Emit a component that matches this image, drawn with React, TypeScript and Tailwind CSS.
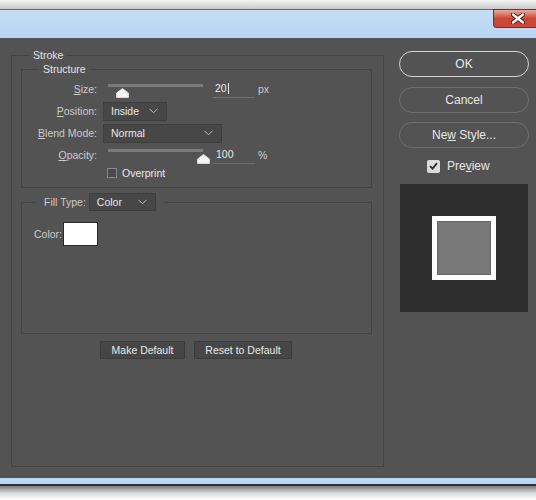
import type { ReactNode } from 'react'

/**
 * Photoshop "Layer Style — Stroke" dialog, dark theme, Win7 frame.
 */

const font = "font-['Liberation_Sans',Arial,sans-serif]"
const labelCls = 'text-[10.5px] leading-none text-[#cacaca]'
const valueCls = 'text-[10.5px] leading-none text-[#e8e8e8]'

function Chevron() {
  return (
    <svg width="9" height="6" viewBox="0 0 9 6" className="shrink-0">
      <path d="M0.5 0.8 L4.5 4.8 L8.5 0.8" fill="none" stroke="#bdbdbd" strokeWidth="1" />
    </svg>
  )
}

function Dropdown({ value, className }: { value: string; className: string }) {
  return (
    <div
      className={`flex items-center justify-between border border-[#3d3d3d] bg-[#474747] pl-[7px] pr-[8px] ${className}`}
    >
      <span className={valueCls}>{value}</span>
      <Chevron />
    </div>
  )
}

function Thumb() {
  return (
    <svg width="13" height="10" viewBox="0 0 13 10">
      <path
        d="M6.5 0.6 L12.4 5 V9.4 H0.6 V5 Z"
        fill="#f5f5f5"
        stroke="#e0e0e0"
        strokeWidth="1"
        strokeLinejoin="round"
      />
    </svg>
  )
}

function Slider({ trackTop, thumbLeft }: { trackTop: string; thumbLeft: string }) {
  return (
    <div className="relative ml-[11px] h-[22px] w-[95px] self-start">
      <div className={`h-[3px] bg-[#7a7a7a] ${trackTop}`} />
      <div className={`absolute top-[10px] ${thumbLeft}`}>
        <Thumb />
      </div>
    </div>
  )
}

function Label({ children }: { children: ReactNode }) {
  return <span className={`w-[75px] shrink-0 text-right ${labelCls}`}>{children}</span>
}

function Row({ children, className = 'h-[22px]' }: { children: ReactNode; className?: string }) {
  return <div className={`flex items-center ${className}`}>{children}</div>
}

function CloseGlyph() {
  return (
    <svg width="14" height="11" viewBox="0 0 14 11">
      <path d="M2 1.5 L12 9.5 M12 1.5 L2 9.5" stroke="#4a1a14" strokeWidth="4.2" strokeLinecap="round" />
      <path d="M2 1.5 L12 9.5 M12 1.5 L2 9.5" stroke="#ffffff" strokeWidth="2.4" strokeLinecap="round" />
    </svg>
  )
}

export default function App() {
  return (
    <div className={`flex h-[500px] w-[536px] flex-col overflow-hidden bg-white ${font}`}>
      {/* top shadow of window */}
      <div className="h-[9px] bg-gradient-to-b from-[#f4f4f4] to-[#c9c9c9]" />

      {/* title bar */}
      <div className="flex h-[29px] justify-end border-t border-[#5f6b78] bg-gradient-to-b from-[#c6def6] to-[#b7d5f4]">
        <div className="-mt-px flex h-[19px] w-[43px] items-center rounded-bl-[4px] border border-r-0 border-[#7a2a22] bg-gradient-to-b from-[#e9a89c] via-[#cf4535] to-[#c84a3a] pl-[17px]">
          <CloseGlyph />
        </div>
      </div>

      {/* dialog body */}
      <div className="flex h-[440px] bg-[#535353]">
        {/* Stroke group */}
        <fieldset className="ml-[11px] mt-[11px] h-[418px] w-[373px] border border-[#444444]">
          <legend className="ml-[17px] px-[4px] text-[10.5px] leading-[13px] text-[#e2e2e2]">Stroke</legend>

          {/* Structure */}
          <fieldset className="ml-[9px] w-[351px] border border-[#444444] pb-[7px]">
            <legend className="ml-[17px] px-[4px] text-[10.5px] leading-[14px] text-[#e2e2e2]">Structure</legend>

            <Row className="mt-[2px] h-[22px]">
              <Label>
                <span className="underline">S</span>ize:
              </Label>
              <Slider trackTop="mt-[6px]" thumbLeft="left-[8px]" />
              <div className="ml-[10px] flex h-[17px] w-[42px] items-center border-b border-[#2f7fdc] pl-[2px]">
                <span className={valueCls}>20</span>
                <span className="ml-px h-[11px] w-px bg-[#e8e8e8]" />
              </div>
              <span className={`ml-[3px] ${labelCls}`}>px</span>
            </Row>

            <Row>
              <Label>
                <span className="underline">P</span>osition:
              </Label>
              <Dropdown value="Inside" className="ml-[6px] h-[19px] w-[64px]" />
            </Row>

            <Row>
              <Label>
                <span className="underline">B</span>lend Mode:
              </Label>
              <Dropdown value="Normal" className="ml-[6px] h-[19px] w-[119px]" />
            </Row>

            <Row>
              <Label>
                <span className="underline">O</span>pacity:
              </Label>
              <Slider trackTop="mt-[5px]" thumbLeft="left-[89px]" />
              <div className="ml-[10px] flex h-[17px] w-[42px] items-center border-b border-[#6c6c6c] pl-[3px]">
                <span className={valueCls}>100</span>
              </div>
              <span className={`ml-[3px] ${labelCls}`}>%</span>
            </Row>

            <Row className="h-[14px] pl-[85px]">
              <span className="h-[10px] w-[10px] border border-[#8a8a8a] bg-[#4a4a4a]" />
              <span className={`ml-[5px] ${valueCls}`}>Overprint</span>
            </Row>
          </fieldset>

          {/* Fill Type */}
          <fieldset className="ml-[9px] mt-[5px] h-[141px] w-[351px] border border-[#444444]">
            <legend className="ml-[14px] pl-[8px] pr-[8px]">
              <div className="flex h-[18px] items-center">
                <span className={labelCls}>Fill Type:</span>
                <Dropdown value="Color" className="ml-[3px] h-[18px] w-[67px]" />
              </div>
            </legend>
            <div className="flex items-center pl-[12px] pt-[11px]">
              <span className={labelCls}>Color:</span>
              <div className="ml-px h-[24px] w-[35px] border border-[#2a2a2a] bg-white" />
            </div>
          </fieldset>

          <div className="mt-[7px] flex justify-center gap-[9px] pr-[3px]">
            <button
              type="button"
              className={`h-[18px] w-[85px] border border-[#3b3b3b] bg-[#464646] ${valueCls}`}
            >
              Make Default
            </button>
            <button
              type="button"
              className={`h-[18px] w-[98px] border border-[#3b3b3b] bg-[#464646] ${valueCls}`}
            >
              Reset to Default
            </button>
          </div>
        </fieldset>

        {/* right column */}
        <div className="ml-[15px] flex w-[130px] flex-col pt-[13px]">
          <button
            type="button"
            className="h-[26px] rounded-full border border-[#d4d4d4] text-[12px] text-[#ececec]"
          >
            OK
          </button>
          <button
            type="button"
            className="mt-[10px] h-[26px] rounded-full border border-[#6e6e6e] text-[12px] text-[#e6e6e6]"
          >
            Cancel
          </button>
          <button
            type="button"
            className="mt-[9px] h-[26px] rounded-full border border-[#6e6e6e] text-[12px] text-[#e6e6e6]"
          >
            Ne<span className="underline">w</span> Style...
          </button>
          <div className="mt-[10px] flex h-[16px] items-center pl-[28px]">
            <span className="flex h-[13px] w-[13px] items-center justify-center rounded-[2px] bg-[#dcdcdc]">
              <svg width="9" height="8" viewBox="0 0 9 8">
                <path d="M1 4.2 L3.5 6.6 L8 1.2" fill="none" stroke="#2e2e2e" strokeWidth="1.8" />
              </svg>
            </span>
            <span className="ml-[7px] text-[12px] leading-none text-[#e6e6e6]">
              Pre<span className="underline">v</span>iew
            </span>
          </div>
          <div className="ml-px mt-[10px] flex h-[128px] w-[128px] items-center justify-center bg-[#2d2d2d]">
            <div className="h-[64px] w-[64px] border-[5px] border-white">
              <div className="h-full w-full border border-[#666666] bg-[#787878]" />
            </div>
          </div>
        </div>
      </div>

      {/* bottom frame */}
      <div className="h-[6px] bg-[#b9d7f5]" />
      <div className="h-[2px] bg-[#2e2e2e]" />
      <div className="flex-1 bg-gradient-to-b from-[#7a7a7a] via-[#d8d8d8] to-white" />
    </div>
  )
}
